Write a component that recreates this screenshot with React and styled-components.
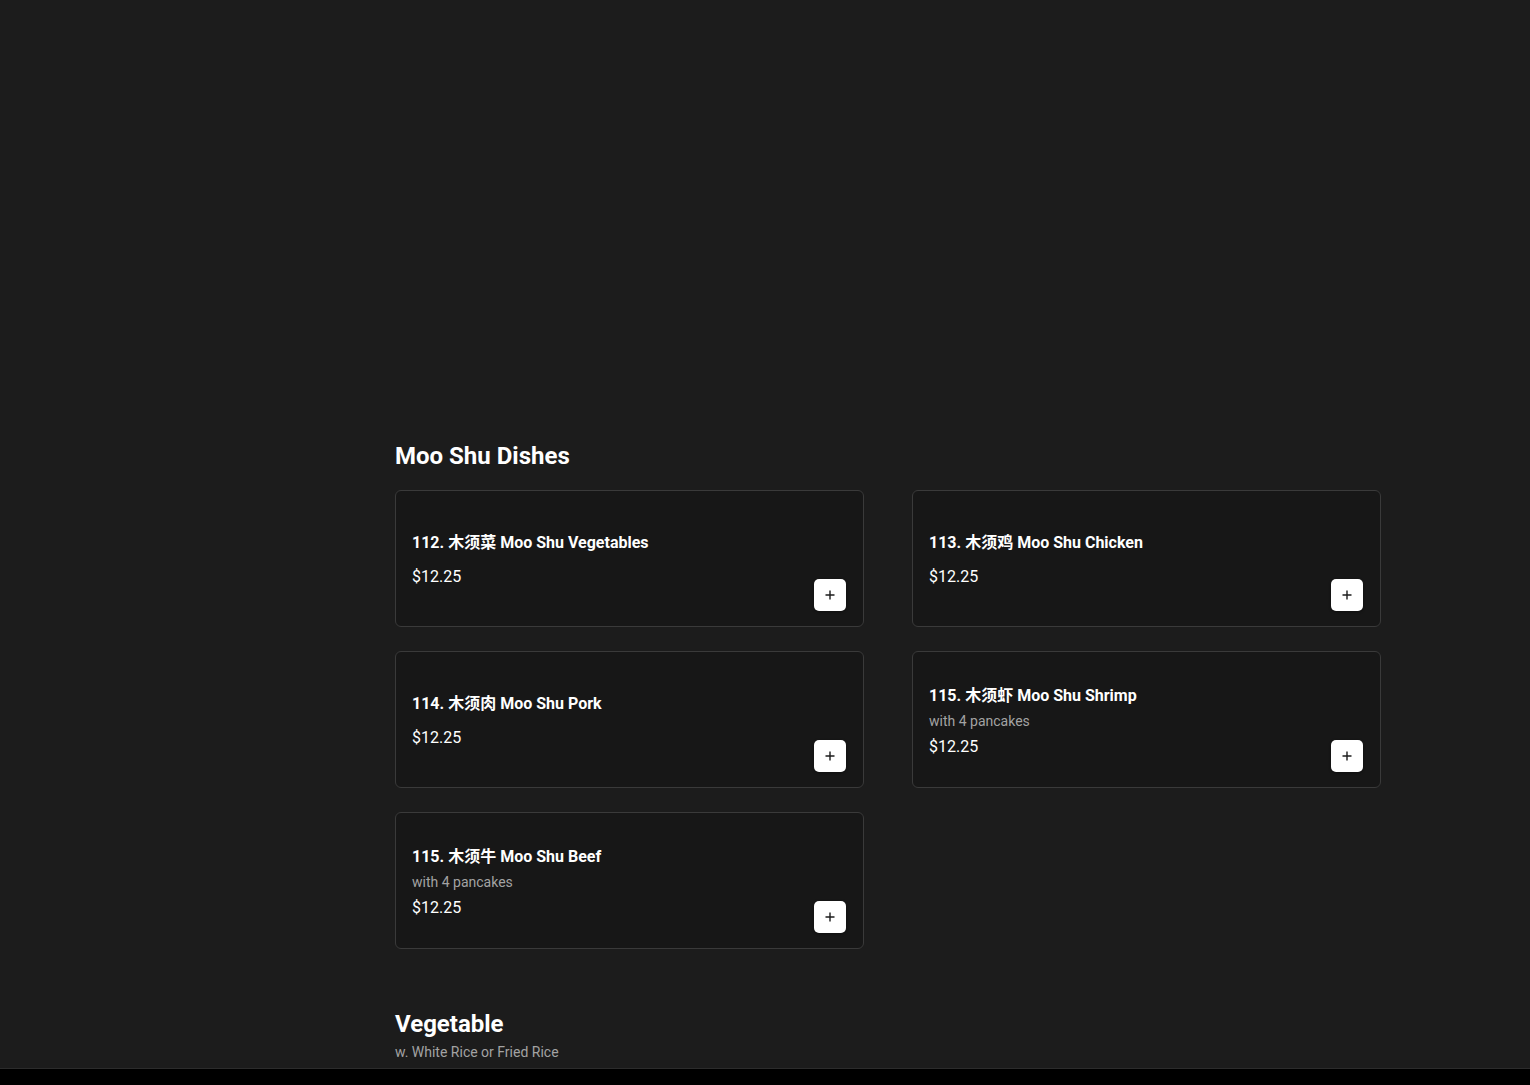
import React from "react";
import styled, { createGlobalStyle } from "styled-components";

const Global = createGlobalStyle`
  html, body { margin: 0; padding: 0; background: #1c1c1c; }
  body { font-family: Roboto, "Noto Sans CJK SC", sans-serif; color: #fff; }
  * { box-sizing: border-box; }
`;

const Page = styled.main`
  min-height: 100vh;
  background: #1c1c1c;
  padding: 440px 0 40px;
`;

const Column = styled.div`
  width: 986px;
  margin-left: 395px;
`;

const Section = styled.section`
  margin-bottom: 59px;
`;

const SectionTitle = styled.h2`
  margin: 0;
  font-size: 24px;
  line-height: 32px;
  font-weight: 700;
  color: #fff;
`;

const SectionNote = styled.p`
  margin: 2px 0 0;
  font-size: 14px;
  line-height: 20px;
  color: #a3a3a3;
`;

const Grid = styled.div`
  display: grid;
  grid-template-columns: 469px 469px;
  column-gap: 48px;
  row-gap: 24px;
  margin-top: ${(p) => p.$top}px;
`;

const Card = styled.div`
  height: 137px;
  background: #171717;
  border: 1px solid #3a3a3a;
  border-radius: 6px;
  padding: 18px 17px 15px 16px;
  display: flex;
  justify-content: space-between;
`;

const Info = styled.div`
  display: flex;
  flex-direction: column;
  justify-content: center;
`;

const Name = styled.h3`
  margin: 0;
  font-size: 16px;
  line-height: 24px;
  font-weight: 700;
  color: #fff;
`;

const Desc = styled.p`
  margin: 3px 0 0;
  font-size: 14px;
  line-height: 20px;
  color: #a3a3a3;
`;

const Price = styled.div`
  margin-top: ${(p) => (p.$desc ? 4 : 10)}px;
  font-size: 16px;
  line-height: 24px;
  color: #fff;
`;

const AddButton = styled.button`
  align-self: flex-end;
  width: 32px;
  height: 32px;
  border: none;
  border-radius: 5px;
  background: #fff;
  display: flex;
  align-items: center;
  justify-content: center;
  padding: 0;
  cursor: pointer;
  box-shadow: 0 1px 3px rgba(0, 0, 0, 0.4);
`;

const BottomBar = styled.div`
  position: fixed;
  left: 0;
  right: 0;
  bottom: 0;
  height: 17px;
  background: #000;
  border-top: 1px solid #2c2c2c;
`;

const Plus = () => (
  <svg width="12" height="12" viewBox="0 0 12 12">
    <path d="M6 1.5v9M1.5 6h9" stroke="#1c1c1c" strokeWidth="1.4" />
  </svg>
);

const items = [
  { name: "112. 木须菜 Moo Shu Vegetables", price: "$12.25" },
  { name: "113. 木须鸡 Moo Shu Chicken", price: "$12.25" },
  { name: "114. 木须肉 Moo Shu Pork", price: "$12.25" },
  { name: "115. 木须虾 Moo Shu Shrimp", desc: "with 4 pancakes", price: "$12.25" },
  { name: "115. 木须牛 Moo Shu Beef", desc: "with 4 pancakes", price: "$12.25" },
];

export default function App() {
  return (
    <Page>
      <Global />
      <Column>
        <Section>
          <SectionTitle>Moo Shu Dishes</SectionTitle>
          <Grid $top={18}>
            {items.map((it, i) => (
              <Card key={i}>
                <Info>
                  <Name>{it.name}</Name>
                  {it.desc && <Desc>{it.desc}</Desc>}
                  <Price $desc={!!it.desc}>{it.price}</Price>
                </Info>
                <AddButton aria-label="Add">
                  <Plus />
                </AddButton>
              </Card>
            ))}
          </Grid>
        </Section>
        <Section>
          <SectionTitle>Vegetable</SectionTitle>
          <SectionNote>w. White Rice or Fried Rice</SectionNote>
        </Section>
      </Column>
      <BottomBar />
    </Page>
  );
}
